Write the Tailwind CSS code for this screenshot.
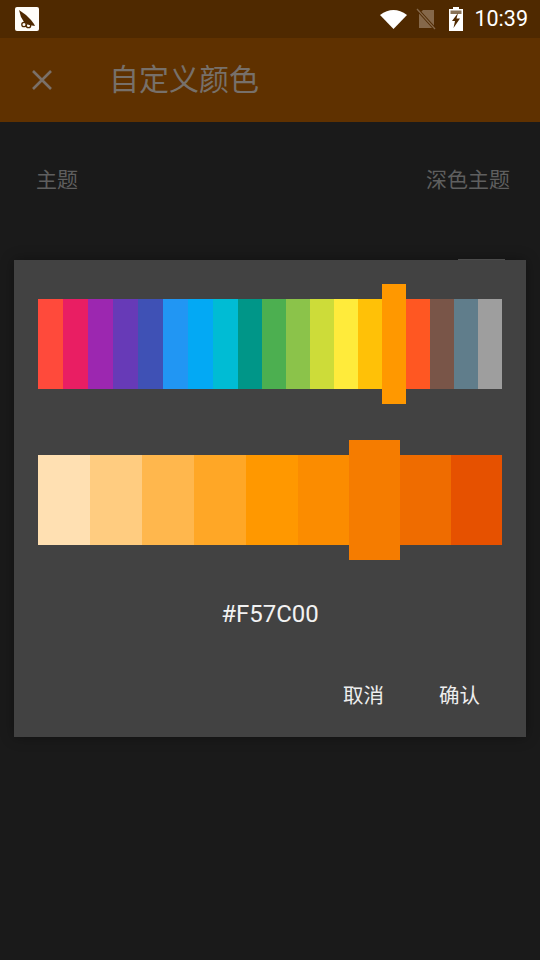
<!DOCTYPE html>
<html lang="zh">
<head>
  <meta charset="UTF-8" />
  <meta name="viewport" content="width=device-width, initial-scale=1.0" />
  <title>自定义颜色</title>
  <script src="https://cdn.jsdelivr.net/npm/@tailwindcss/browser@4"></script>
</head>
<body class="bg-[#1a1a1a] font-['Roboto','Noto_Sans_CJK_SC',sans-serif]">
  <div class="relative w-[540px] h-[960px] overflow-hidden">

    <!-- Status bar -->
    <div class="h-[38px] bg-[#4f2900] flex items-center pl-[15px] pr-[12px]">
      <div class="w-[24px] h-[24px] bg-[#fffdf8] rounded-[2px] flex items-center justify-center">
        <svg viewBox="0 0 24 24" class="w-[24px] h-[24px]">
          <path d="M4 3 L11 8 L16 13 L19 17 L20 19 L14 18 L9 15 L6 10 Z" fill="#4f2900" />
          <circle cx="9" cy="17.5" r="2.2" fill="none" stroke="#4f2900" stroke-width="1.3" />
          <circle cx="13.5" cy="18.5" r="2.2" fill="none" stroke="#4f2900" stroke-width="1.3" />
        </svg>
      </div>
      <div class="ml-auto flex items-center">
        <svg viewBox="0 0 27 20" class="w-[27px] h-[20px]">
          <path d="M0 6 Q13.5 -4 27 6 L13.5 20 Z" fill="#fff" />
        </svg>
        <svg viewBox="0 0 20 22" class="w-[20px] h-[22px] ml-[9px]">
          <path d="M7 2 H18 V20 H3 V6 Z" fill="#85684a" />
          <path d="M1 1 L19 21" stroke="#4f2900" stroke-width="3" />
          <path d="M1 1 L19 21" stroke="#85684a" stroke-width="1.3" />
        </svg>
        <svg viewBox="0 0 14 24" class="w-[14px] h-[24px] ml-[13px]">
          <path d="M4 0 H10 V2 H14 V24 H0 V2 H4 Z" fill="#fff" />
          <path d="M1.5 3.5 H12.5 V7 H1.5 Z" fill="#8a7357" />
          <path d="M9 6 L3 14 H6 L4.5 21 L11 11.5 H7.5 Z" fill="#4f2900" />
        </svg>
        <span class="ml-[11px] text-[21.5px] leading-none text-white">10:39</span>
      </div>
    </div>

    <!-- App bar -->
    <div class="h-[84px] bg-[#5f3100] flex items-center">
      <svg viewBox="0 0 22 22" class="w-[22px] h-[22px] ml-[31px]" fill="none" stroke="#7a7068" stroke-width="2.6">
        <path d="M2 2 L20 20 M20 2 L2 20" />
      </svg>
      <h1 class="ml-[56px] text-[30px] leading-none text-[#77706a]">自定义颜色</h1>
    </div>

    <!-- Setting row behind the dialog -->
    <div class="flex justify-between items-center pl-[36px] pr-[30px] pt-[46px] text-[21px] leading-[24px] text-[#5f5f5f]">
      <span>主题</span>
      <span>深色主题</span>
    </div>

    <!-- Dialog -->
    <div class="absolute left-[458px] top-[259px] w-[47px] h-[1px] bg-[#5c5c5c]"></div>
    <div class="absolute left-[14px] top-[260px] w-[512px] h-[477px] bg-[#424242] shadow-[0_0_12px_rgba(0,0,0,0.35)] pt-[39px] px-[24px]">

      <div class="flex h-[90px] overflow-visible">
        <div class="w-[25px] bg-[#ff4a3b]"></div>
        <div class="w-[25px] bg-[#e91e63]"></div>
        <div class="w-[25px] bg-[#9c27b0]"></div>
        <div class="w-[25px] bg-[#673ab7]"></div>
        <div class="w-[25px] bg-[#3f51b5]"></div>
        <div class="w-[25px] bg-[#2196f3]"></div>
        <div class="w-[25px] bg-[#03a9f4]"></div>
        <div class="w-[25px] bg-[#00bcd4]"></div>
        <div class="w-[24px] bg-[#009688]"></div>
        <div class="w-[24px] bg-[#4caf50]"></div>
        <div class="w-[24px] bg-[#8bc34a]"></div>
        <div class="w-[24px] bg-[#cddc39]"></div>
        <div class="w-[24px] bg-[#ffeb3b]"></div>
        <div class="w-[24px] bg-[#ffc107]"></div>
        <div class="w-[24px] h-[120px] -mt-[15px] bg-[#ff9800]"></div>
        <div class="w-[24px] bg-[#ff5722]"></div>
        <div class="w-[24px] bg-[#795548]"></div>
        <div class="w-[24px] bg-[#607d8b]"></div>
        <div class="w-[24px] bg-[#9e9e9e]"></div>
      </div>

      <div class="flex h-[90px] mt-[66px]">
        <div class="w-[52px] bg-[#ffe0b2]"></div>
        <div class="w-[52px] bg-[#ffcc80]"></div>
        <div class="w-[52px] bg-[#ffb74d]"></div>
        <div class="w-[52px] bg-[#ffa726]"></div>
        <div class="w-[52px] bg-[#ff9800]"></div>
        <div class="w-[51px] bg-[#fb8c00]"></div>
        <div class="w-[51px] h-[120px] -mt-[15px] bg-[#f57c00]"></div>
        <div class="w-[51px] bg-[#ef6c00]"></div>
        <div class="w-[51px] bg-[#e65100]"></div>
      </div>

      <p class="mt-[54px] text-center text-[24px] leading-[30px] text-[#f2f2f2]">#F57C00</p>

      <div class="flex justify-end gap-[55px] mt-[53px] pr-[22px] text-[20.5px] leading-[28px] text-[#eeeeee]">
        <button>取消</button>
        <button>确认</button>
      </div>
    </div>
  </div>
</body>
</html>
